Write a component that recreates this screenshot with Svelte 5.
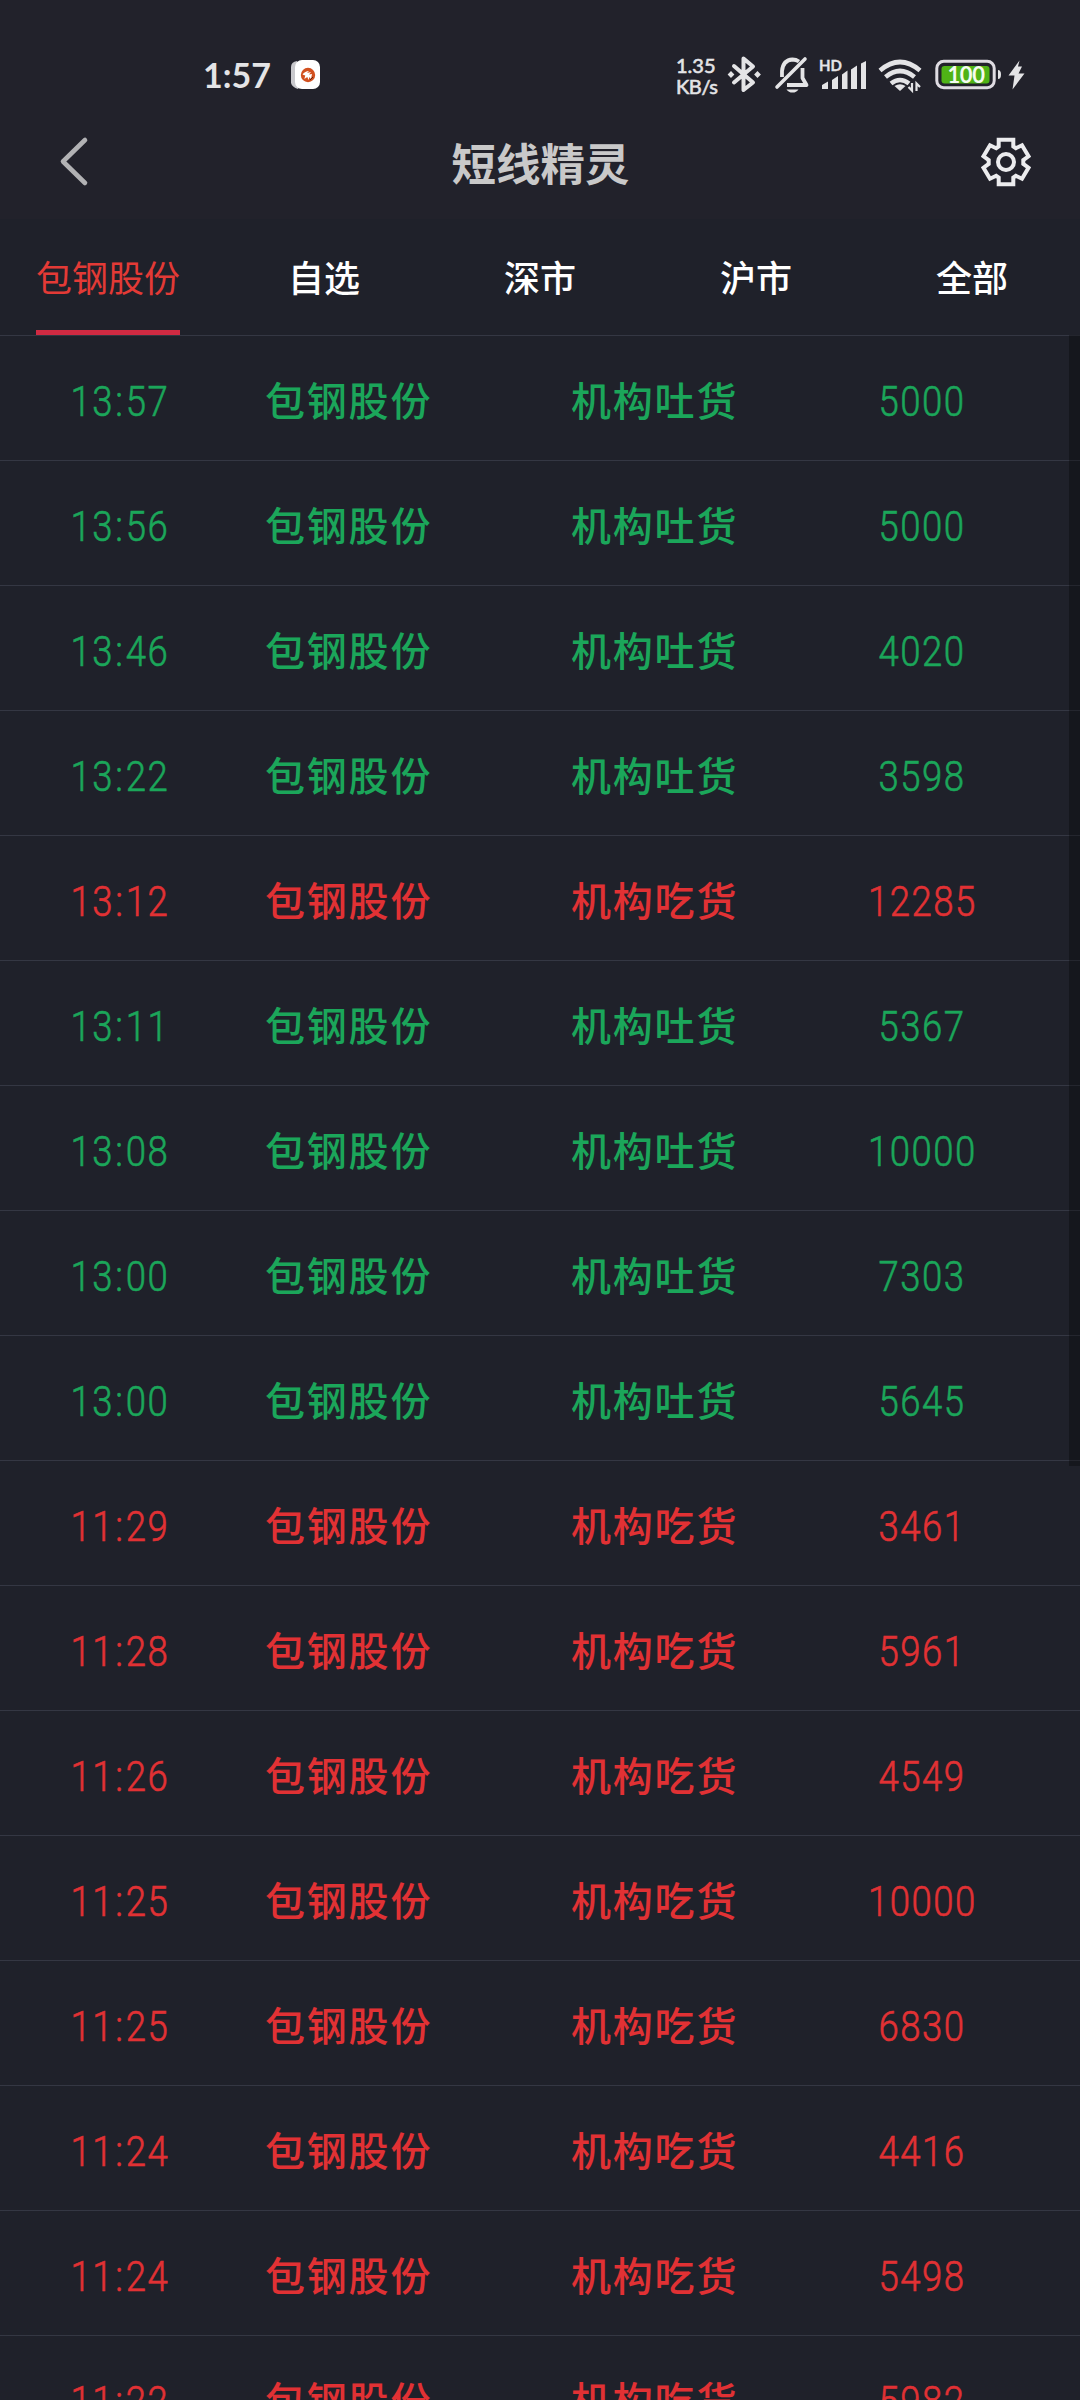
<script>
  const tabs = ['包钢股份', '自选', '深市', '沪市', '全部'];

  const rows = [
    ['13:57', 'sell', '5000'],
    ['13:56', 'sell', '5000'],
    ['13:46', 'sell', '4020'],
    ['13:22', 'sell', '3598'],
    ['13:12', 'buy', '12285'],
    ['13:11', 'sell', '5367'],
    ['13:08', 'sell', '10000'],
    ['13:00', 'sell', '7303'],
    ['13:00', 'sell', '5645'],
    ['11:29', 'buy', '3461'],
    ['11:28', 'buy', '5961'],
    ['11:26', 'buy', '4549'],
    ['11:25', 'buy', '10000'],
    ['11:25', 'buy', '6830'],
    ['11:24', 'buy', '4416'],
    ['11:24', 'buy', '5498'],
    ['11:22', 'buy', '5982'],
  ].map(([time, side, amount]) => ({ time: time.split(':'), side, amount }));
</script>

<div class="screen">
  <header>
    <div class="status">
      <span class="clock">1:57</span>
      <svg class="app" width="32" height="32" viewBox="0 0 32 32">
        <path d="M7 2Q1 3 1 8V24Q2 28 8 30L14 20Z" fill="#c9c9cd" />
        <rect x="5" y="1" width="25" height="29" rx="7" fill="#fff" />
        <circle cx="18" cy="16" r="7.2" fill="#d2501f" />
        <path d="M12.500 15.500Q15 12 19 12l-2 2 4-1-2 2.500 3-.5-1 5-1.500-2-1 3-1.200-3-3 2 1-3.500z" fill="#fff" />
        <path d="M20 21l3-3" stroke="#5a2410" stroke-width="1" />
      </svg>
      <div class="speed"><span>1.35</span><span>KB/s</span></div>
      <svg class="icons" width="310" height="44" viewBox="724 52 310 44" fill="none">
        <!-- bluetooth -->
        <path d="M734 66L753 82.500L743.500 90V58.500L753 66.500L734 82.500" stroke="#e4e4e6" stroke-width="4" stroke-linejoin="round" stroke-linecap="round" />
        <path d="M731 71l3.400 3.500-3.400 3.500-3.400-3.500zM757.500 71l3.400 3.500-3.400 3.500-3.400-3.500z" fill="#e4e4e6" />
        <!-- muted bell -->
        <path d="M782 77V71Q783 60 792.500 59.500Q796 59.500 799 61.500M802.500 68V78L806.500 85H787" stroke="#e4e4e6" stroke-width="3.800" stroke-linejoin="round" />
        <path d="M777 87L805 59" stroke="#e4e4e6" stroke-width="3.600" stroke-linecap="round" />
        <path d="M786.500 89.500H798.500Q796.500 92.600 792.500 92.600T786.500 89.500Z" fill="#e4e4e6" />
        <!-- signal -->
        <path d="M822 85l6-3.500v7.500h-6zM832 80l6-4v13h-6zM842 74.500l5.500-4V89H842zM851 69.500l6-4V89h-6zM861 63.500l5-2.500V89h-5z" fill="#e4e4e6" />
        <!-- wifi -->
        <path d="M880 70.500Q900 53.500 920 70.500M885.500 77Q900 65 914.500 77M891 83.500Q900 76.500 909 83.500" stroke="#e4e4e6" stroke-width="4.600" />
        <path d="M894.500 86Q900 82.500 905.500 86L900 91Z" fill="#e4e4e6" />
        <path d="M912 83V90.500L908.500 87M916.500 91V83.500L920 87" stroke="#e4e4e6" stroke-width="2.200" />
        <!-- battery -->
        <rect x="936.800" y="61.300" width="57.400" height="26.400" rx="7" stroke="#dfdce2" stroke-width="3" />
        <rect x="941.500" y="66" width="48" height="17.500" rx="3" fill="#4fb316" />
        <path d="M998 70Q1001 70 1001 74.500T998 79Z" fill="#e4e4e6" />
        <path d="M1019.500 60.500L1008.500 75.500H1014.500L1012.500 89.500L1024.500 73.500H1018.500L1022 66.500H1018Z" fill="#e4e4e6" />
      </svg>
      <span class="hd">HD</span>
      <span class="charge">100</span>
    </div>
    <div class="bar">
      <svg width="40" height="56" viewBox="0 0 40 56" fill="none">
        <path d="M30 8L8 29.500L30 51" stroke="#b2b2b4" stroke-width="4.600" stroke-linecap="round" stroke-linejoin="round" />
      </svg>
      <h1>短线精灵</h1>
      <svg width="52" height="52" viewBox="-26 -26 52 52" fill="none" stroke="#ececee" stroke-width="4">
        <path d="M-7.300 -22.300H7.300V-15.500L9.800 -13.800L16 -16.700L22.500 -5.700L17.300 -2V2L22.500 5.700L16 16.700L9.800 13.800L7.300 15.500V22.300H-7.300V15.500L-9.800 13.800L-16 16.700L-22.500 5.700L-17.300 2V-2L-22.500 -5.700L-16 -16.700L-9.800 -13.800L-7.300 -15.500Z" />
        <circle r="8" />
      </svg>
    </div>
  </header>

  <nav>
    {#each tabs as tab, i}
      <div class="tab" class:active={i === 0}><span>{tab}</span></div>
    {/each}
  </nav>

  <main>
    {#each rows as row}
      <div class="row {row.side}">
        <span class="num time">{row.time[0]}<i>:</i>{row.time[1]}</span>
        <span class="name">包钢股份</span>
        <span class="event">{row.side === 'sell' ? '机构吐货' : '机构吃货'}</span>
        <span class="num amount">{row.amount}</span>
      </div>
    {/each}
    <div class="scrollbar"></div>
  </main>
</div>

<style>
  :global(body) {
    margin: 0;
    background: #1f212a;
  }
  .screen {
    width: 1080px;
    height: 2400px;
    overflow: hidden;
    display: flex;
    flex-direction: column;
    background: #1f212a;
    font-family: 'Noto Sans CJK SC', sans-serif;
  }
  header {
    height: 219px;
    flex: none;
    background: #22222b;
  }
  .status {
    position: relative;
    height: 108px;
    box-sizing: border-box;
    padding: 44px 46px 0 203px;
    display: flex;
    color: #e4e4e6;
  }
  .clock {
    width: 87px;
    font: 700 34px/61px Lato, sans-serif;
  }
  .app {
    margin-top: 15px;
  }
  .speed {
    display: flex;
    flex-direction: column;
    margin: 9px 0 0 354px;
    width: 48px;
    font: 400 20px/22px Lato, sans-serif;
    letter-spacing: -0.4px;
    -webkit-text-stroke: 0.6px #e4e4e6;
  }
  .speed span:first-child {
    padding-top: 1px;
    letter-spacing: 0;
  }
  .speed span:last-child {
    margin-top: -1px;
  }
  .icons {
    margin-top: 8px;
    flex: none;
  }
  .hd {
    position: absolute;
    left: 819px;
    top: 56px;
    font: 700 15px/18px Lato, sans-serif;
    -webkit-text-stroke: 0.3px #e4e4e6;
  }
  .charge {
    position: absolute;
    left: 942px;
    width: 48px;
    top: 63px;
    text-align: center;
    font: 700 22px/24px Lato, sans-serif;
    color: #f4fbf0;
    letter-spacing: -0.5px;
  }
  .bar {
    height: 108px;
    padding: 0 48px 0 55px;
    display: flex;
    align-items: center;
    justify-content: space-between;
  }
  .bar svg {
    margin-top: -1px;
  }
  .bar svg:first-child {
    margin-top: -5px;
  }
  h1 {
    margin: 0;
    padding-left: 6px;
    font-size: 44.5px;
    font-weight: 700;
    line-height: 60px;
    color: #c9c9c9;
  }
  nav {
    height: 116px;
    flex: none;
    display: grid;
    grid-template-columns: repeat(5, 216px);
    font-size: 36px;
    font-weight: 500;
    color: #fff;
  }
  .tab {
    display: flex;
    justify-content: center;
  }
  .tab span {
    line-height: 115px;
    height: 111px;
  }
  .active {
    color: #e33a36;
    font-weight: 400;
  }
  .active span {
    border-bottom: 5px solid #d02a42;
  }
  main {
    position: relative;
  }
  .row {
    height: 124px;
    box-sizing: content-box;
    border-top: 1px solid #343743;
    display: grid;
    grid-template-columns: 240px 215px 397px 140px;
    align-items: center;
    font-size: 40px;
    font-weight: 500;
    line-height: 60px;
    color: #e13134;
  }
  .sell {
    color: #1ba65a;
  }
  .name,
  .event {
    padding-top: 2px;
    letter-spacing: 1.8px;
    white-space: nowrap;
  }
  .name {
    padding-left: 25px;
  }
  .event {
    padding-left: 116px;
  }
  .num {
    justify-self: center;
    padding-top: 8px;
    font-family: Roboto, sans-serif;
    font-size: 42px;
    font-weight: 300;
    letter-spacing: 1.7px;
    -webkit-text-stroke: 0.6px currentColor;
    transform: scaleX(0.87);
  }
  .num i {
    font-style: normal;
    margin: 0 1.500px;
  }
  .scrollbar {
    position: absolute;
    top: 0;
    right: 0;
    width: 11px;
    height: 1131px;
    background: rgba(0, 0, 0, 0.3);
  }
</style>
